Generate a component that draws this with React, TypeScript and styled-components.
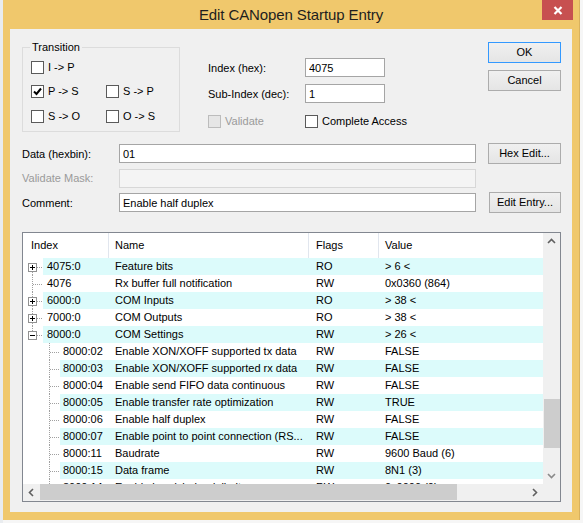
import React from "react";
import styled, { createGlobalStyle } from "styled-components";

const GlobalStyle = createGlobalStyle`
  html, body {
    margin: 0;
    padding: 0;
  }
  body {
    background: #f2f2f2;
    font-family: "Liberation Sans", Arial, sans-serif;
    font-size: 11px;
    color: #000;
  }
  * {
    box-sizing: border-box;
  }
`;

type Row = {
  level: 0 | 1;
  kind: "plus" | "minus" | "leaf";
  index: string;
  name: string;
  flags: string;
  value: string;
};

const rows: Row[] = [
  { level: 0, kind: "plus", index: "4075:0", name: "Feature bits", flags: "RO", value: "> 6 <" },
  { level: 0, kind: "leaf", index: "4076", name: "Rx buffer full notification", flags: "RW", value: "0x0360 (864)" },
  { level: 0, kind: "plus", index: "6000:0", name: "COM Inputs", flags: "RO", value: "> 38 <" },
  { level: 0, kind: "plus", index: "7000:0", name: "COM Outputs", flags: "RO", value: "> 38 <" },
  { level: 0, kind: "minus", index: "8000:0", name: "COM Settings", flags: "RW", value: "> 26 <" },
  { level: 1, kind: "leaf", index: "8000:02", name: "Enable XON/XOFF supported tx data", flags: "RW", value: "FALSE" },
  { level: 1, kind: "leaf", index: "8000:03", name: "Enable XON/XOFF supported rx data", flags: "RW", value: "FALSE" },
  { level: 1, kind: "leaf", index: "8000:04", name: "Enable send FIFO data continuous", flags: "RW", value: "FALSE" },
  { level: 1, kind: "leaf", index: "8000:05", name: "Enable transfer rate optimization", flags: "RW", value: "TRUE" },
  { level: 1, kind: "leaf", index: "8000:06", name: "Enable half duplex", flags: "RW", value: "FALSE" },
  { level: 1, kind: "leaf", index: "8000:07", name: "Enable point to point connection (RS...", flags: "RW", value: "FALSE" },
  { level: 1, kind: "leaf", index: "8000:11", name: "Baudrate", flags: "RW", value: "9600 Baud (6)" },
  { level: 1, kind: "leaf", index: "8000:15", name: "Data frame", flags: "RW", value: "8N1 (3)" },
  { level: 1, kind: "leaf", index: "8000:1A", name: "Enable handshake delimiter", flags: "RW", value: "0x0000 (0)" },
];

const TreeGuides = ({ row, isFirst }: { row: Row; isFirst: boolean }) => {
  const width = row.level === 0 ? 20 : 37;
  const dot = { stroke: "#a0a0a0", strokeDasharray: "1 1" };
  return (
    <svg width={width} height={17} shapeRendering="crispEdges" style={{ flexShrink: 0 }}>
      {row.level === 0 && row.kind === "leaf" && (
        <>
          <line x1={9.5} y1={0} x2={9.5} y2={17} {...dot} />
          <line x1={10} y1={9.5} x2={20} y2={9.5} {...dot} />
        </>
      )}
      {row.level === 0 && row.kind !== "leaf" && (
        <>
          {!isFirst && <line x1={9.5} y1={0} x2={9.5} y2={5} {...dot} />}
          {row.kind === "plus" && <line x1={9.5} y1={14} x2={9.5} y2={17} {...dot} />}
          <line x1={14} y1={9.5} x2={20} y2={9.5} {...dot} />
          <rect x={5.5} y={5.5} width={8} height={8} fill="#fff" stroke="#919191" />
          <line x1={7} y1={9.5} x2={12} y2={9.5} stroke="#000" />
          {row.kind === "plus" && <line x1={9.5} y1={7} x2={9.5} y2={12} stroke="#000" />}
        </>
      )}
      {row.level === 1 && (
        <>
          <line x1={26.5} y1={0} x2={26.5} y2={17} {...dot} />
          <line x1={27} y1={9.5} x2={37} y2={9.5} {...dot} />
        </>
      )}
    </svg>
  );
};

const CheckMark = () => (
  <svg width={11} height={11} viewBox="0 0 11 11">
    <polyline points="2,5.5 4.5,8 9,2.5" fill="none" stroke="#000" strokeWidth={2} />
  </svg>
);

const Chevron = ({ dir, color = "#606060" }: { dir: "up" | "down" | "left" | "right"; color?: string }) => {
  const pts = {
    up: "5,10 8.5,6.5 12,10",
    down: "5,7 8.5,10.5 12,7",
    left: "10,5 6.5,8.5 10,12",
    right: "7,5 10.5,8.5 7,12",
  }[dir];
  return (
    <svg width={17} height={17}>
      <polyline points={pts} fill="none" stroke={color} strokeWidth={1.6} />
    </svg>
  );
};

const Check = ({ label, checked, disabled }: { label: string; checked?: boolean; disabled?: boolean }) => (
  <CheckItem>
    <CheckBox $disabled={disabled}>{checked && <CheckMark />}</CheckBox>
    <CheckText $disabled={disabled}>{label}</CheckText>
  </CheckItem>
);

export default function App() {
  return (
    <>
      <GlobalStyle />
      <Page>
        <Window>
          <TitleBar>
            <span />
            <Title>Edit CANopen Startup Entry</Title>
            <CloseButton>
              <svg width={10} height={9} viewBox="0 0 10 9">
                <path d="M1.5 1 L8.5 8 M8.5 1 L1.5 8" stroke="#fff" strokeWidth={2.2} />
              </svg>
            </CloseButton>
          </TitleBar>
          <Client>
            <TopSection>
              <GroupBox>
                <Legend>Transition</Legend>
                <CheckGrid>
                  <Check label="I -> P" />
                  <span />
                  <Check label="P -> S" checked />
                  <Check label="S -> P" />
                  <Check label="S -> O" />
                  <Check label="O -> S" />
                </CheckGrid>
              </GroupBox>
              <Middle>
                <FieldGrid>
                  <span>Index (hex):</span>
                  <TextInput $width={80} readOnly value="4075" />
                  <span>Sub-Index (dec):</span>
                  <TextInput $width={80} readOnly value="1" />
                </FieldGrid>
                <CheckRow>
                  <Check label="Validate" disabled />
                  <Check label="Complete Access" />
                </CheckRow>
              </Middle>
              <ButtonColumn>
                <Button $primary>OK</Button>
                <Button>Cancel</Button>
              </ButtonColumn>
            </TopSection>

            <Form>
              <FormRow>
                <FormLabel>Data (hexbin):</FormLabel>
                <TextInput $width={357} readOnly value="01" />
                <Button $gap={12}>Hex Edit...</Button>
              </FormRow>
              <FormRow>
                <FormLabel $disabled>Validate Mask:</FormLabel>
                <TextInput $width={357} disabled value="" readOnly />
              </FormRow>
              <FormRow>
                <FormLabel>Comment:</FormLabel>
                <TextInput $width={357} readOnly value="Enable half duplex" />
                <Button $gap={13} $width={72}>Edit Entry...</Button>
              </FormRow>
            </Form>

            <ListView>
              <Viewport>
                <Header>
                  <HeaderCell $width={86} $pad={8}>Index</HeaderCell>
                  <HeaderCell $width={200} $pad={6}>Name</HeaderCell>
                  <HeaderCell $width={70} $pad={7}>Flags</HeaderCell>
                  <HeaderCell $width={164} $pad={6} $last>Value</HeaderCell>
                </Header>
                {rows.map((row, i) => (
                  <ListRow key={row.index}>
                    <TreeGuides row={row} isFirst={i === 0} />
                    <RowBody $shade={i % 2 === 0}>
                      <IndexCell $width={row.level === 0 ? 66 : 49} $pad={row.level === 0 ? 4 : 3}>
                        {row.index}
                      </IndexCell>
                      <Cell $width={200} $pad={6}>{row.name}</Cell>
                      <Cell $width={70} $pad={7}>{row.flags}</Cell>
                      <Cell $pad={6}>{row.value}</Cell>
                    </RowBody>
                  </ListRow>
                ))}
              </Viewport>
              <VScroll>
                <Chevron dir="up" />
                <VThumb />
                <Spacer />
                <Chevron dir="down" color="#8a8a8a" />
              </VScroll>
              <HScroll>
                <Chevron dir="left" />
                <HThumb />
                <Spacer />
                <Chevron dir="right" />
              </HScroll>
              <Corner />
            </ListView>
          </Client>
        </Window>
      </Page>
    </>
  );
}

const Page = styled.div`
  width: 583px;
  height: 523px;
  display: flex;
  padding-left: 3px;
  background: linear-gradient(to right, #e9ecef 0 3px, #f6f6f6 3px);
`;

const Window = styled.div`
  width: 577px;
  height: 520px;
  display: flex;
  flex-direction: column;
  background: #f0c86c;
  border-right: 1px solid #d9b25e;
`;

const TitleBar = styled.div`
  height: 29px;
  flex-shrink: 0;
  display: grid;
  grid-template-columns: 1fr auto 1fr;
  align-items: center;
`;

const Title = styled.div`
  font-size: 15px;
  color: #1e1e1e;
  letter-spacing: -0.1px;
`;

const CloseButton = styled.div`
  justify-self: end;
  align-self: start;
  margin-right: 6px;
  width: 31px;
  height: 20px;
  background: #c75050;
  display: flex;
  align-items: center;
  justify-content: center;
`;

const Client = styled.div`
  flex: 1;
  margin: 0 7px 8px 7px;
  background: #f0f0f0;
  padding: 0 11px 0 12px;
  display: flex;
  flex-direction: column;
`;

const TopSection = styled.div`
  height: 103px;
  display: flex;
  align-items: flex-start;
`;

const GroupBox = styled.div`
  position: relative;
  margin-top: 18px;
  width: 158px;
  height: 85px;
  border: 1px solid #dcdcdc;
  padding: 13px 0 0 8px;
`;

const Legend = styled.span`
  position: absolute;
  top: -7px;
  left: 7px;
  padding: 0 2px;
  line-height: 13px;
  background: #f0f0f0;
`;

const CheckGrid = styled.div`
  display: grid;
  grid-template-columns: 75px auto;
  grid-template-rows: 24px 25px 13px;
  align-items: start;
`;

const CheckItem = styled.div`
  display: flex;
  align-items: center;
  gap: 4px;
  height: 13px;
`;

const CheckBox = styled.span<{ $disabled?: boolean }>`
  width: 13px;
  height: 13px;
  flex-shrink: 0;
  border: 1px solid ${({ $disabled }) => ($disabled ? "#bcbcbc" : "#5a5a5a")};
  background: ${({ $disabled }) => ($disabled ? "#e6e6e6" : "#fff")};
  display: flex;
  align-items: center;
  justify-content: center;
`;

const CheckText = styled.span<{ $disabled?: boolean }>`
  line-height: 13px;
  white-space: nowrap;
  color: ${({ $disabled }) => ($disabled ? "#9a9a9a" : "#000")};
`;

const Middle = styled.div`
  margin-left: 28px;
  margin-top: 29px;
  display: flex;
  flex-direction: column;
`;

const FieldGrid = styled.div`
  display: grid;
  grid-template-columns: 97px 80px;
  grid-template-rows: 19px 19px;
  row-gap: 7px;
  align-items: center;
`;

const CheckRow = styled.div`
  margin-top: 12px;
  display: grid;
  grid-template-columns: 97px auto;
`;

const TextInput = styled.input<{ $width: number }>`
  width: ${({ $width }) => $width}px;
  height: 19px;
  margin: 0;
  border: 1px solid #a5a5a5;
  padding: 0 3px;
  font: 11px "Liberation Sans", Arial, sans-serif;
  color: #000;
  background: #fff;
  outline: none;

  &:disabled {
    background: #f4f4f4;
    border-color: #d7d7d7;
  }
`;

const ButtonColumn = styled.div`
  margin-left: auto;
  margin-top: 13px;
  display: flex;
  flex-direction: column;
  gap: 7px;
`;

const Button = styled.div<{ $primary?: boolean; $gap?: number; $width?: number }>`
  width: ${({ $width }) => $width ?? 73}px;
  height: 21px;
  margin-left: ${({ $gap }) => $gap ?? 0}px;
  border: 1px solid ${({ $primary }) => ($primary ? "#3399ff" : "#acacac")};
  background: linear-gradient(#f0f0f0, #e5e5e5);
  display: flex;
  align-items: center;
  justify-content: center;
  line-height: 13px;
`;

const Form = styled.div`
  margin-top: 11px;
  display: grid;
  grid-template-rows: 21px 21px 21px;
  row-gap: 3.5px;
`;

const FormRow = styled.div`
  display: flex;
  align-items: center;
`;

const FormLabel = styled.span<{ $disabled?: boolean }>`
  width: 97px;
  color: ${({ $disabled }) => ($disabled ? "#9a9a9a" : "#000")};
`;

const ListView = styled.div`
  margin-top: 19px;
  height: 270px;
  border: 1px solid #828790;
  display: grid;
  grid-template-columns: 520px 17px;
  grid-template-rows: 251px 17px;
  background: #fff;
`;

const Viewport = styled.div`
  overflow: hidden;
  background: #fff;
`;

const Header = styled.div`
  height: 25px;
  display: flex;
`;

const HeaderCell = styled.div<{ $width: number; $pad: number; $last?: boolean }>`
  width: ${({ $width }) => $width}px;
  padding-left: ${({ $pad }) => $pad}px;
  line-height: 24px;
  border-right: ${({ $last }) => ($last ? "none" : "1px solid #e1e6ee")};
`;

const ListRow = styled.div`
  height: 17px;
  display: flex;
`;

const RowBody = styled.div<{ $shade: boolean }>`
  flex: 1;
  display: flex;
  background: ${({ $shade }) => ($shade ? "#dcfbfb" : "#fff")};
`;

const Cell = styled.div<{ $width?: number; $pad: number }>`
  ${({ $width }) => ($width ? `width: ${$width}px;` : "flex: 1;")}
  flex-shrink: 0;
  padding-left: ${({ $pad }) => $pad}px;
  line-height: 17px;
  white-space: nowrap;
  overflow: hidden;
`;

const IndexCell = styled(Cell)``;

const VScroll = styled.div`
  background: #f0f0f0;
  display: flex;
  flex-direction: column;
`;

const VThumb = styled.div`
  margin-top: 149px;
  margin-left: 1px;
  width: 16px;
  height: 49px;
  background: #cdcdcd;
`;

const HScroll = styled.div`
  background: #f0f0f0;
  display: flex;
`;

const HThumb = styled.div`
  width: 417px;
  height: 16px;
  margin-top: 0;
  background: #cdcdcd;
`;

const Spacer = styled.div`
  flex: 1;
`;

const Corner = styled.div`
  background: #f0f0f0;
`;
